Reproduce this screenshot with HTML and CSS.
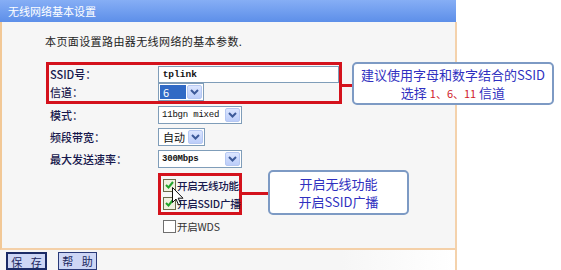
FILE: index.html
```html
<!DOCTYPE html>
<html lang="zh-CN">
<head>
    <meta charset="UTF-8">
    <title>无线网络基本设置</title>
    <link rel="stylesheet" href="styles.css">
</head>
<body>
    <div class="window">
        <div class="title">无线网络基本设置</div>

        <div class="panel">
            <p class="intro">本页面设置路由器无线网络的基本参数.</p>

            <div class="form">
                <div class="mark mark-ssid">
                    <div class="row">
                        <span class="label">SSID号：</span>
                        <span class="text-field">tplink</span>
                    </div>
                    <div class="row">
                        <span class="label">信道：</span>
                        <span class="select w-channel">
                            <span class="val picked">6</span>
                            <span class="arrow"><svg width="9" height="6" viewBox="0 0 9 6"><path d="M1 1l3.5 3.5L8 1" fill="none" stroke="#3d5a99" stroke-width="2"/></svg></span>
                        </span>
                    </div>
                </div>

                <div class="row">
                    <span class="label">模式：</span>
                    <span class="select w-wide">
                        <span class="val mono">11bgn mixed</span>
                        <span class="arrow"><svg width="9" height="6" viewBox="0 0 9 6"><path d="M1 1l3.5 3.5L8 1" fill="none" stroke="#3d5a99" stroke-width="2"/></svg></span>
                    </span>
                </div>
                <div class="row">
                    <span class="label">频段带宽：</span>
                    <span class="select w-band">
                        <span class="val">自动</span>
                        <span class="arrow"><svg width="9" height="6" viewBox="0 0 9 6"><path d="M1 1l3.5 3.5L8 1" fill="none" stroke="#3d5a99" stroke-width="2"/></svg></span>
                    </span>
                </div>
                <div class="row">
                    <span class="label">最大发送速率：</span>
                    <span class="select w-wide">
                        <span class="val mono bold">300Mbps</span>
                        <span class="arrow"><svg width="9" height="6" viewBox="0 0 9 6"><path d="M1 1l3.5 3.5L8 1" fill="none" stroke="#3d5a99" stroke-width="2"/></svg></span>
                    </span>
                </div>

                <div class="mark mark-check">
                    <div class="check"><span class="box on"><svg width="9" height="8" viewBox="0 0 9 8"><path d="M1 4l2.5 2.5L8 1" fill="none" stroke="#22a32a" stroke-width="2"/></svg></span>开启无线功能</div>
                    <div class="check"><span class="box on"><svg width="9" height="8" viewBox="0 0 9 8"><path d="M1 4l2.5 2.5L8 1" fill="none" stroke="#22a32a" stroke-width="2"/></svg></span>开启SSID广播</div>
                </div>
                <div class="check check-wds"><span class="box"></span>开启WDS</div>
            </div>
        </div>

        <div class="footer">
            <button class="btn btn-focus">保 存</button>
            <button class="btn">帮 助</button>
        </div>

        <!-- annotations laid over the form -->
        <div class="wire wire-ssid"></div>
        <div class="callout callout-ssid">
            建议使用字母和数字结合的SSID<br>
            选择 <span class="red">1、6、11</span> 信道
        </div>

        <div class="wire wire-check"></div>
        <div class="callout callout-check">
            开启无线功能<br>
            开启SSID广播
        </div>

        <svg class="cursor" width="12" height="19" viewBox="0 0 12 19">
            <path d="M0.5 0.5V15.5L4 12L6.6 18L8.8 17L6.2 11.2H11Z" fill="#fff" stroke="#111" stroke-width="1"/>
        </svg>
    </div>
</body>
</html>
```

FILE: styles.css
```css
* {
    box-sizing: border-box;
}

body {
    margin: 0;
    background: #fff;
    font-family: "Noto Sans CJK SC", sans-serif;
    font-size: 11px;
    color: #222;
}

.window {
    position: relative;
    width: 457px;
    height: 270px;
}

.title {
    height: 22px;
    width: 456px;
    padding-left: 8px;
    line-height: 22px;
    color: #fff;
    background: linear-gradient(#86aef5, #5d8fe9);
}

.panel {
    height: 228px;
    background: #f6f6f6;
    border-left: 2px solid #f2c896;
    border-right: 2px solid #f4d2ac;
    border-bottom: 2px solid #f4d0a8;
}

.intro {
    margin: 0;
    padding: 11px 0 0 43px;
    line-height: 16px;
    letter-spacing: 0.4px;
    color: #1e1e1e;
}

.form {
    margin: 13px 0 0 44px;
}

.row {
    display: flex;
    align-items: center;
    height: 22px;
    padding-left: 4px;
    white-space: nowrap;
}

.label {
    width: 108px;
    color: #17184d;
    font-weight: 500;
}

/* red highlight frames */
.mark {
    border: 3px solid #d4121c;
}

.mark-ssid {
    width: 296px;
}

.mark-ssid .row {
    height: 18px;
    padding-left: 1px;
}

.text-field {
    display: flex;
    align-items: center;
    width: 182px;
    height: 17px;
    padding-left: 4px;
    background: #fff;
    border: 1px solid #7f9db9;
    font-family: "Liberation Mono", monospace;
    font-size: 9.5px;
    font-weight: bold;
    color: #111;
}

.select {
    display: flex;
    align-items: center;
    justify-content: space-between;
    height: 18px;
    padding: 1px;
    background: #fff;
    border: 1px solid #7f9db9;
}

.w-channel { width: 46px; }
.w-band { width: 47px; }
.w-wide { width: 84px; }

.val {
    padding-left: 3px;
    color: #111;
}

.val.picked {
    width: 26px;
    height: 14px;
    line-height: 14px;
    background: #316ac5;
    color: #fff;
}

.mono {
    font-family: "Liberation Mono", monospace;
    font-size: 9px;
    letter-spacing: -0.2px;
    padding-left: 2px;
}

.bold {
    font-weight: bold;
}

.arrow {
    display: flex;
    align-items: center;
    justify-content: center;
    flex: none;
    width: 15px;
    height: 14px;
    border-radius: 2px;
    background: linear-gradient(#dce6ff, #bccdf9);
    border: 1px solid #b6c8f2;
}

.mark-check {
    width: 84px;
    margin: 3px 0 0 112px;
    padding-left: 2px;
}

.check {
    display: flex;
    align-items: center;
    height: 18px;
    white-space: nowrap;
    font-size: 10.5px;
    letter-spacing: -0.2px;
    color: #17184d;
    font-weight: 500;
}

.check-wds {
    margin: 2px 0 0 117px;
    color: #333;
    font-weight: normal;
}

.box {
    display: flex;
    align-items: center;
    justify-content: center;
    flex: none;
    width: 13px;
    height: 13px;
    margin-right: 1px;
    background: #fff;
    border: 1px solid #6f6f6f;
}

.box.on {
    background: #f0f0e0;
    border-color: #6a6a4a;
}

.footer {
    display: flex;
    gap: 11px;
    height: 20px;
    padding: 2px 0 0 6px;
    border-right: 2px solid #f4d2ac;
    background: linear-gradient(to right, #f6f6f6 75%, #fff);
}

.btn {
    height: 18px;
    width: 39px;
    padding: 0;
    font-family: "Noto Sans CJK SC", sans-serif;
    font-size: 11px;
    letter-spacing: 3px;
    text-indent: 3px;
    color: #1b2660;
    background: #cdd6f5;
    border: 1px solid #2a3a78;
}

.btn-focus {
    width: 41px;
    border: 2px solid #1b2b66;
}

/* callouts */
.callout {
    position: absolute;
    background: #fff;
    border: 2px solid #7d9ac4;
    border-radius: 5px;
    font-size: 13px;
    line-height: 18px;
    text-align: center;
    color: #3030c0;
}

.callout-ssid {
    left: 352px;
    top: 62px;
    width: 202px;
    height: 43px;
    padding-top: 2px;
}

.callout-check {
    left: 268px;
    top: 170px;
    width: 141px;
    height: 45px;
    padding-top: 3px;
}

.red {
    color: #d0202a;
    font-size: 11px;
}

.wire {
    position: absolute;
    height: 3px;
    background: #d4121c;
}

.wire-ssid {
    left: 342px;
    top: 84px;
    width: 10px;
}

.wire-check {
    left: 242px;
    top: 192px;
    width: 26px;
}

.cursor {
    position: absolute;
    left: 172px;
    top: 187px;
}
```
